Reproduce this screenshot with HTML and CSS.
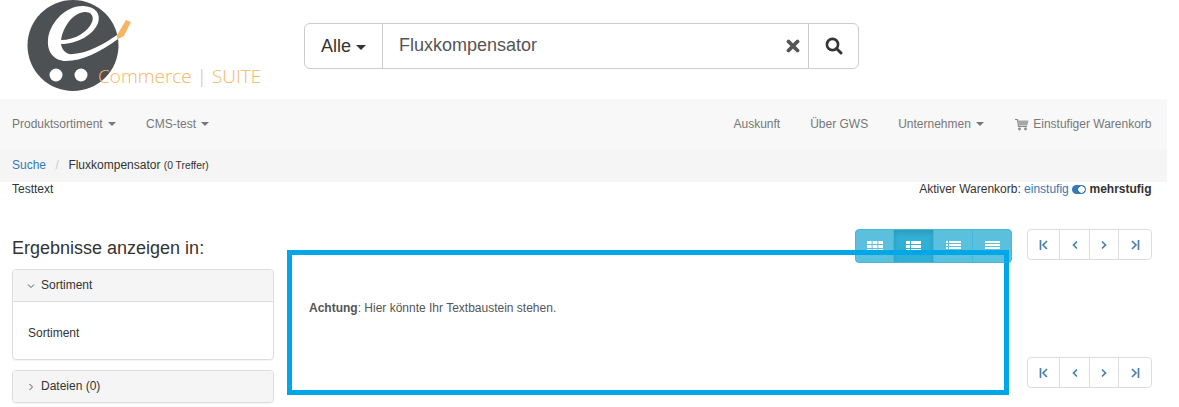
FILE: index.html
```html
<!DOCTYPE html>
<html lang="de">
<head>
<meta charset="utf-8">
<title>Suche</title>
<link rel="stylesheet" href="styles.css">
</head>
<body>
<div class="page">
  <header class="top">
    <svg class="logo" width="304" height="99" viewBox="0 0 304 99">
      <circle cx="73" cy="45.500" r="45.500" fill="#4d5154"/>
      <path d="M118 39C100 52 82 61 66 61 54 61 47 52 48 40 49 24 65 5 84 6 96 7 101 14 98 23 94 34 78 44 61 44 62 50 66 55 73 54 88 53 104 44 117 35Z" fill="#fff"/>
      <path d="M61 40C63 26 74 12 85 12 92 12 94 17 92 22 88 32 75 40 61 40Z" fill="#4d5154"/>
      <circle cx="56" cy="75" r="6.500" fill="#fff"/>
      <circle cx="81" cy="75" r="6.500" fill="#fff"/>
      <path d="M117 35 126 20 131 22 124 36 118 39Z" fill="#f5b564"/>
      <text class="logo-text" x="98" y="83">Commerce | SUITE</text>
    </svg>
    <form class="search">
      <div class="search-cat">Alle <span class="caret caret-lg"></span></div>
      <div class="search-input">Fluxkompensator</div>
      <svg class="search-clear" width="14" height="14" viewBox="0 0 14 14"><path d="M2.500 2.500 11.500 11.500M11.500 2.500 2.500 11.500" stroke="#555" stroke-width="3.800" stroke-linecap="round"/></svg>
      <div class="search-btn">
        <svg width="18" height="18" viewBox="0 0 18 18"><circle cx="7.500" cy="7.500" r="5.600" fill="none" stroke="#333" stroke-width="2.600"/><path d="M11.500 11.500 16 16" stroke="#333" stroke-width="3" stroke-linecap="round"/></svg>
      </div>
    </form>
  </header>

  <nav class="nav">
    <ul class="nav-list">
      <li>Produktsortiment <span class="caret"></span></li>
      <li>CMS-test <span class="caret"></span></li>
    </ul>
    <ul class="nav-list nav-right">
      <li>Auskunft</li>
      <li>Über GWS</li>
      <li>Unternehmen <span class="caret"></span></li>
      <li class="cart-item">
        <svg width="15" height="13" viewBox="0 0 15 13"><path d="M1 1.500H3.500L4.500 8.500H13" fill="none" stroke="#888" stroke-width="1.200"/><path d="M4 2.500H14.500L13.300 7.500H4.600Z" fill="#a3a8a5"/><circle cx="5.500" cy="11" r="1.400" fill="#888"/><circle cx="11.500" cy="11" r="1.400" fill="#888"/></svg>
        Einstufiger Warenkorb
      </li>
    </ul>
  </nav>

  <div class="crumbs">
    <a class="link">Suche</a><span class="crumb-sep">/</span><span class="crumb-cur">Fluxkompensator <small>(0 Treffer)</small></span>
  </div>

  <div class="info">
    <span>Testtext</span>
    <span>Aktiver Warenkorb: <a class="link">einstufig</a> <span class="toggle"></span> <b>mehrstufig</b></span>
  </div>

  <div class="content">
    <aside class="side">
      <h2 class="side-title">Ergebnisse anzeigen in:</h2>
      <section class="panel">
        <div class="panel-head"><svg class="chev" width="8" height="8" viewBox="0 0 8 8"><path d="M1 2.500 4 5.500 7 2.500" fill="none" stroke="#555"/></svg>Sortiment</div>
        <div class="panel-body">Sortiment</div>
      </section>
      <section class="panel">
        <div class="panel-head"><svg class="chev" width="8" height="8" viewBox="0 0 8 8"><path d="M2.500 1 5.500 4 2.500 7" fill="none" stroke="#555"/></svg>Dateien (0)</div>
      </section>
    </aside>

    <main class="main">
      <div class="toolbar">
        <div class="views">
          <div class="view view-1"><svg width="16" height="11" viewBox="0 0 16 11"><path fill="#fff" d="M0 0h4.600v3H0zM5.600 0h4.800v3H5.600zM11.400 0H16v3h-4.600zM0 4h4.600v3H0zM5.600 4h4.800v3H5.600zM11.400 4H16v3h-4.600zM0 8h4.600v3H0zM5.600 8h4.800v3H5.600zM11.400 8H16v3h-4.600z"/></svg></div>
          <div class="view view-active"><svg width="15" height="11" viewBox="0 0 15 11"><path fill="#fff" d="M0 0h4v3H0zM5 0h10v3H5zM0 4h4v3H0zM5 4h10v3H5zM0 8h4v3H0zM5 8h10v3H5z"/></svg></div>
          <div class="view view-3"><svg width="15" height="11" viewBox="0 0 15 11"><path fill="#fff" d="M0 0h2v2H0zM3 0h12v2H3zM0 3h2v2H0zM3 3h12v2H3zM0 6h2v2H0zM3 6h12v2H3zM0 9h2v2H0zM3 9h12v2H3z"/></svg></div>
          <div class="view view-4"><svg width="15" height="11" viewBox="0 0 15 11"><path fill="#fff" d="M0 0h15v2H0zM0 3h15v2H0zM0 6h15v2H0zM0 9h15v2H0z"/></svg></div>
        </div>
        <div class="pager">
          <div class="pg pg-1"><svg width="10" height="10" viewBox="0 0 10 10"><path d="M1.500 0V10M8 1 4 5 8 9" fill="none" stroke="#4b7fb0" stroke-width="1.700"/></svg></div>
          <div class="pg pg-2"><svg width="8" height="10" viewBox="0 0 8 10"><path d="M6 1.500 2.500 5 6 8.500" fill="none" stroke="#4b7fb0" stroke-width="1.700"/></svg></div>
          <div class="pg pg-3"><svg width="8" height="10" viewBox="0 0 8 10"><path d="M2 1.500 5.500 5 2 8.500" fill="none" stroke="#4b7fb0" stroke-width="1.700"/></svg></div>
          <div class="pg pg-4"><svg width="10" height="10" viewBox="0 0 10 10"><path d="M8.500 0V10M2 1 6 5 2 9" fill="none" stroke="#4b7fb0" stroke-width="1.700"/></svg></div>
        </div>
      </div>
      <div class="notice-row">
        <div class="notice"><b>Achtung</b>: Hier könnte Ihr Textbaustein stehen.</div>
        <div class="pager pager-bottom">
          <div class="pg pg-1"><svg width="10" height="10" viewBox="0 0 10 10"><path d="M1.500 0V10M8 1 4 5 8 9" fill="none" stroke="#4b7fb0" stroke-width="1.700"/></svg></div>
          <div class="pg pg-2"><svg width="8" height="10" viewBox="0 0 8 10"><path d="M6 1.500 2.500 5 6 8.500" fill="none" stroke="#4b7fb0" stroke-width="1.700"/></svg></div>
          <div class="pg pg-3"><svg width="8" height="10" viewBox="0 0 8 10"><path d="M2 1.500 5.500 5 2 8.500" fill="none" stroke="#4b7fb0" stroke-width="1.700"/></svg></div>
          <div class="pg pg-4"><svg width="10" height="10" viewBox="0 0 10 10"><path d="M8.500 0V10M2 1 6 5 2 9" fill="none" stroke="#4b7fb0" stroke-width="1.700"/></svg></div>
        </div>
      </div>
    </main>
  </div>
</div>
</body>
</html>
```
FILE: styles.css
```css
* { box-sizing: border-box; }
html, body { margin: 0; height: 407px; overflow: hidden; background: #fff; }
body { font: 12px/17px "Liberation Sans", Arial, sans-serif; color: #333; }
.page { width: 1167px; }
.link { color: #337ab7; }

.top { height: 99px; display: flex; align-items: flex-start; }
.logo { flex: none; display: block; width: 304px; }
.logo-text { font: 300 19px "Open Sans", sans-serif; fill: #f5b564; }
.search { display: flex; align-items: center; width: 555px; height: 46px; margin-top: 23px; border: 1px solid #ccc; border-radius: 6px; font-size: 18px; }
.search-cat { width: 78px; height: 100%; display: flex; align-items: center; gap: 5px; padding-left: 16px; border-right: 1px solid #ccc; color: #333; }
.search-input { flex: 1; padding-left: 16px; padding-bottom: 1px; color: #555; }
.search-clear { margin-right: 8px; }
.search-btn { width: 50px; height: 100%; display: flex; align-items: center; justify-content: center; border-left: 1px solid #ccc; }
.caret { display: inline-block; width: 0; height: 0; margin-left: 2px; vertical-align: middle; border-top: 4px solid; border-right: 4px solid transparent; border-left: 4px solid transparent; }
.caret-lg { margin-left: 0; margin-top: 2px; border-top-width: 5px; border-left-width: 5px; border-right-width: 5px; }

.nav { height: 50px; display: flex; justify-content: space-between; align-items: center; padding: 0 15.500px 0 12px; background: #f8f8f8; color: #777; }
.nav-list { list-style: none; margin: 0; padding: 0; display: flex; gap: 30px; }
.cart-item { display: flex; align-items: center; gap: 4px; }

.crumbs { height: 33px; padding: 8px 12px 0; background: #f5f5f5; color: #333; }
.crumb-sep { padding: 0 9.500px; color: #ccc; }
.crumbs small { font-size: 10.300px; }

.info { display: flex; justify-content: space-between; padding: 0 15.500px 0 12px; line-height: 15px; }
.toggle { display: inline-block; width: 14px; height: 9px; border-radius: 5px; background: radial-gradient(circle at 9.500px 4.500px, #fff 3px, #337ab7 3.500px); vertical-align: -1px; }

.content { display: flex; padding: 0 15px 0 12px; gap: 13px; margin-top: 32px; }
.side { width: 262px; flex: none; padding-top: 9px; }
.side-title { margin: 0 0 11px; font-size: 18px; line-height: 20px; font-weight: 400; }
.panel { border: 1px solid #ddd; border-radius: 4px; margin-bottom: 10px; box-shadow: 0 1px 1px rgba(0,0,0,.05); }
.panel-head { height: 31px; padding-left: 14px; display: flex; align-items: center; gap: 6px; background: #f5f5f5; border-radius: 3px; }
.panel-body { height: 58px; padding: 23px 15px 0; border-top: 1px solid #ddd; }
.chev { flex: none; }

.main { flex: 1; min-width: 0; }
.toolbar { display: flex; justify-content: flex-end; align-items: flex-start; }
.views { display: flex; height: 34px; margin-right: 15px; border-radius: 4px; overflow: hidden; background: #5bc0de; border: 1px solid #46b8da; }
.view { height: 100%; display: flex; align-items: center; justify-content: center; border-right: 1px solid #46b8da; }
.view-1 { width: 38px; }
.view-active { width: 40px; background: #31b0d5; box-shadow: inset 0 3px 5px rgba(0,0,0,.125); }
.view-3 { width: 39px; }
.view-4 { width: 38px; border-right: 0; }
.pager { display: flex; width: 125px; height: 31px; border: 1px solid #ddd; border-radius: 4px; background: #fff; flex: none; }
.pg { display: flex; align-items: center; justify-content: center; border-right: 1px solid #ddd; }
.pg:last-child { border-right: 0; }
.pg-1 { width: 32px; }
.pg-2 { width: 30px; }
.pg-3 { width: 29px; }
.pg-4 { flex: 1; }

.notice-row { display: flex; justify-content: space-between; align-items: flex-end; margin-top: -13px; position: relative; }
.notice { width: 722px; height: 145px; border: 5px solid #00a7e8; padding: 0 17px 28px; display: flex; align-items: center; color: #555; white-space: pre; }
.notice b { font-weight: 700; }
.pager-bottom { margin-bottom: 7px; }
```
